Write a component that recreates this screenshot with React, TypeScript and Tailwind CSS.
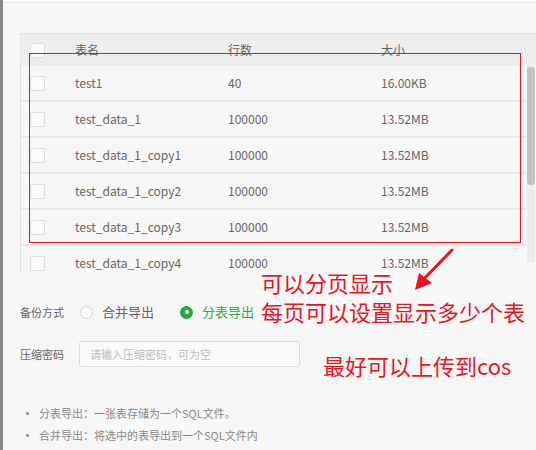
import React from "react";

const rows = [
  { name: "test1", count: "40", size: "16.00KB" },
  { name: "test_data_1", count: "100000", size: "13.52MB" },
  { name: "test_data_1_copy1", count: "100000", size: "13.52MB" },
  { name: "test_data_1_copy2", count: "100000", size: "13.52MB" },
  { name: "test_data_1_copy3", count: "100000", size: "13.52MB" },
  { name: "test_data_1_copy4", count: "100000", size: "13.52MB" },
];

const Checkbox = () => (
  <span className="block w-[15px] h-[15px] rounded-[2px] border border-[#dedede] bg-[#fbfbfb]" />
);

export default function App() {
  return (
    <div
      className="relative w-[536px] h-[450px] overflow-hidden bg-[#f7f7f7] flex text-[#666]"
      style={{ fontFamily: '"Noto Sans CJK SC", "Noto Sans", sans-serif' }}
    >
      {/* left window edge */}
      <div className="w-[3px] shrink-0 bg-[#858585]" />

      <div className="flex-1 flex flex-col min-w-0">
        <div className="h-[3px] shrink-0 bg-[#fbfbfb] border-b border-[#e4e4e4]" />

        {/* table */}
        <div className="mt-[30px] ml-[17px]">
          <div className="h-[33px] flex items-center bg-[#eeeeee] border-t border-l border-[#e2e2e2] text-[12px] pl-[9px]">
            <div className="w-[45px]">
              <Checkbox />
            </div>
            <div className="w-[153px]">表名</div>
            <div className="w-[153px]">行数</div>
            <div>大小</div>
          </div>
          <div className="flex h-[206px] overflow-hidden">
            <div className="w-[506px] border-l border-[#e2e2e2]">
              {rows.map((r) => (
                <div
                  key={r.name}
                  className="h-[36px] flex items-center border-b-2 border-[#e8e8e8] text-[12px] pl-[9px]"
                >
                  <div className="w-[45px]">
                    <Checkbox />
                  </div>
                  <div className="w-[153px]">{r.name}</div>
                  <div className="w-[153px]">{r.count}</div>
                  <div>{r.size}</div>
                </div>
              ))}
            </div>
            <div className="w-[8px] ml-[1px] h-[196px] bg-[#ebebeb]">
              <div className="mt-[1px] h-[118px] rounded-[4px] bg-[#c2c2c2]" />
            </div>
          </div>
        </div>

        {/* form */}
        <div className="ml-[17px] mt-[28px] h-[24px] flex items-center">
          <span className="w-[60px] text-[11px] text-[#666]">备份方式</span>
          <span className="w-[13px] h-[13px] rounded-full border border-[#d6d6d6] bg-[#fbfbfb]" />
          <span className="ml-[9px] text-[13px] text-[#666]">合并导出</span>
          <span className="ml-[26px] w-[13px] h-[13px] rounded-full bg-[#27a844] flex items-center justify-center">
            <span className="w-[4px] h-[4px] rounded-full bg-white" />
          </span>
          <span className="ml-[9px] text-[13px] text-[#27a844]">分表导出</span>
        </div>

        <div className="ml-[17px] mt-[17px] flex items-center">
          <span className="w-[59px] text-[11px] text-[#666]">压缩密码</span>
          <input
            className="w-[221px] h-[26px] rounded-[3px] border border-[#dcdcdc] bg-[#fafafa] px-[10px] text-[11px] outline-none placeholder:text-[#bdbdbd]"
            placeholder="请输入压缩密码，可为空"
          />
        </div>

        <ul className="ml-[23px] mt-[35px] text-[11px] text-[#888]">
          <li className="h-[22px] flex items-center gap-[10px]">
            <span className="w-[3px] h-[3px] rounded-full bg-[#888]" />
            分表导出：一张表存储为一个SQL文件。
          </li>
          <li className="h-[22px] flex items-center gap-[10px]">
            <span className="w-[3px] h-[3px] rounded-full bg-[#888]" />
            合并导出：将选中的表导出到一个SQL文件内
          </li>
        </ul>
      </div>

      {/* annotations */}
      <div className="absolute left-[29px] top-[53px] w-[492px] h-[190px] border-[1.5px] border-[#e8141e]" />
      <svg className="absolute left-[410px] top-[245px]" width="50" height="50" viewBox="0 0 50 50">
        <line x1="42" y1="5" x2="12" y2="36" stroke="#e8141e" strokeWidth="3" strokeLinecap="round" />
        <polygon points="5,45 9,28 22,38" fill="#e8141e" />
      </svg>
      <div className="absolute left-[261px] top-[268px] text-[22px] leading-[29px] text-[#e8141e]">
        <div>可以分页显示</div>
        <div>每页可以设置显示多少个表</div>
      </div>
      <div className="absolute left-[323px] top-[351px] text-[22px] leading-[29px] text-[#e8141e]">
        最好可以上传到cos
      </div>
    </div>
  );
}
